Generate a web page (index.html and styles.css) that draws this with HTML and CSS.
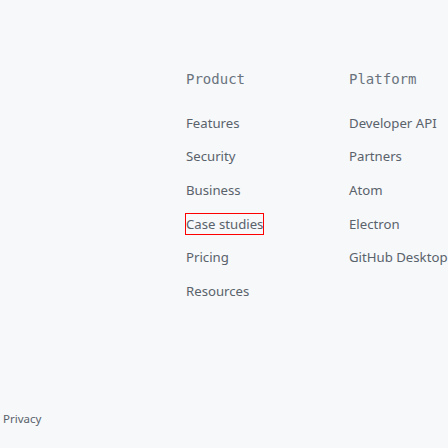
FILE: index.html
```html
<!DOCTYPE html>
<html>
<head>
<meta charset="utf-8">
<link rel="stylesheet" href="styles.css">
</head>
<body>
<div class="footer">
  <div class="cols">
    <div class="col">
      <h2 class="heading">Product</h2>
      <ul class="links">
        <li><a>Features</a></li>
        <li><a>Security</a></li>
        <li><a>Business</a></li>
        <li><a class="focus">Case studies</a></li>
        <li><a>Pricing</a></li>
        <li><a>Resources</a></li>
      </ul>
    </div>
    <div class="col">
      <h2 class="heading">Platform</h2>
      <ul class="links">
        <li><a>Developer API</a></li>
        <li><a>Partners</a></li>
        <li><a>Atom</a></li>
        <li><a>Electron</a></li>
        <li><a>GitHub Desktop</a></li>
      </ul>
    </div>
  </div>
  <div class="bottom"><a class="small">Privacy</a></div>
</div>
</body>
</html>
```
FILE: styles.css
```css
html, body {
  margin: 0;
  padding: 0;
  width: 448px;
  height: 448px;
  overflow: hidden;
  background: #f6f8fa;
}
.footer {
  font-family: "Noto Sans", sans-serif;
  color: #5a626b;
  height: 448px;
  display: flex;
  flex-direction: column;
}
.cols {
  display: flex;
  padding-left: 186px;
  padding-top: 69px;
}
.col {
  width: 163px;
  flex: none;
}
.heading {
  font-family: "DejaVu Sans Mono", monospace;
  font-size: 14px;
  font-weight: normal;
  line-height: 21px;
  margin: 0 0 16px 0;
  color: #6a737d;
}
.links {
  list-style: none;
  margin: 0;
  padding: 0;
}
.links li {
  height: 33.6px;
  display: flex;
  align-items: center;
}
.links a {
  display: inline-block;
  font-size: 13.2px;
  line-height: 20px;
  white-space: nowrap;
}
.focus {
  outline: 1px solid #ff0000;
  outline-offset: 0;
}
.bottom {
  margin-top: auto;
  padding: 0 0 20px 3px;
}
.small {
  font-size: 11.5px;
  line-height: 16px;
}
```
